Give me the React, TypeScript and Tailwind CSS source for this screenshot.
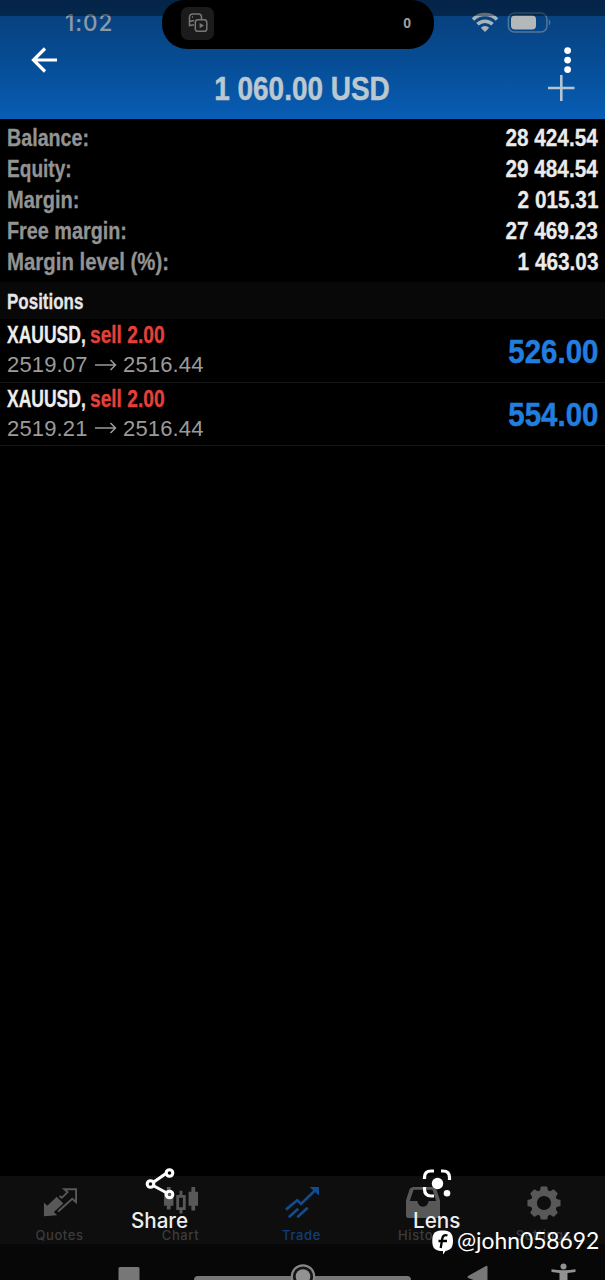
import type { ReactNode } from "react"
import clsx from "clsx"

const summary = [
  { label: "Balance:", value: "28 424.54", fit: "scale-x-[0.82]" },
  { label: "Equity:", value: "29 484.54", fit: "scale-x-[0.795]" },
  { label: "Margin:", value: "2 015.31", fit: "scale-x-[0.835]" },
  { label: "Free margin:", value: "27 469.23", fit: "scale-x-[0.825]" },
  { label: "Margin level (%):", value: "1 463.03", fit: "scale-x-[0.85]" },
]

const positions = [
  { symbol: "XAUUSD,", side: "sell 2.00", open: "2519.07", price: "2516.44", profit: "526.00" },
  { symbol: "XAUUSD,", side: "sell 2.00", open: "2519.21", price: "2516.44", profit: "554.00" },
]

function Tab({ label, active, children }: { label: string; active?: boolean; children: ReactNode }) {
  return (
    <div
      className={clsx(
        "flex-1 flex flex-col items-center pt-[10px] pr-[2px]",
        active ? "text-[#124c8f]" : "text-[#585858]",
      )}
    >
      <svg width="36" height="36" viewBox="0 0 36 36" fill="none">
        {children}
      </svg>
      <span
        className={clsx(
          "mt-[6px] text-[13px] leading-[18px] font-medium tracking-[0.6px]",
          active ? "text-[#103f78]" : "text-[#3c3c3c]",
        )}
      >
        {label}
      </span>
    </div>
  )
}

function Header() {
  return (
    <header className="relative h-[119px] bg-linear-to-b from-[#083e79] via-[#064c93] to-[#085db5]">
      {/* Phone status bar */}
      <div className="flex h-[49px] items-start">
        <span className="ml-[65px] mt-[9px] w-[97px] font-[Inter] text-[22.5px] leading-[28px] font-medium tracking-[0.9px] text-[#8d9aa6]">
          1:02
        </span>
        <div className="relative z-10 flex h-[49px] w-[272px] items-center justify-between rounded-b-[25px] rounded-t-[22px] bg-black pl-[19px] pr-[23px]">
          <div className="-mt-[3px] flex size-[33px] items-center justify-center rounded-[7px] bg-[#1b1b1b]">
            <svg width="20" height="20" viewBox="0 0 20 20" fill="none" stroke="#777" strokeWidth="1.5">
              <path d="M6 12H4.5l-3 .5V4a3 3 0 0 1 3-3h6a3 3 0 0 1 3 3v2M1.5 8.5 6 7.5M4 4h1" />
              <rect x="7.3" y="6.8" width="11.5" height="11.5" rx="2.6" />
              <path d="m11.6 10 4.4 2.6-4.400 2.600z" fill="#777" stroke="none" />
            </svg>
          </div>
          <span className="-mt-[2px] text-[14px] font-bold text-[#a0a0a0]">0</span>
        </div>
        <svg className="ml-[37px] mt-[12px]" width="28" height="21" viewBox="0 0 28 21" fill="none" stroke="#a9b4ba" strokeWidth="3.5">
          <path d="M2 7.5a17 17 0 0 1 24 0M6.5 12.2a10.8 10.8 0 0 1 15 0" />
          <path d="M14 20 9.8 15.8a6 6 0 0 1 8.4 0z" fill="#a9b4ba" stroke="none" />
        </svg>
        <svg className="ml-[8px] mt-[12px]" width="45" height="21" viewBox="0 0 45 21" fill="none">
          <rect x="1.4" y="1" width="38.5" height="19" rx="6" stroke="#547799" strokeWidth="1.5" />
          <rect x="4" y="3.5" width="25" height="14" rx="4" fill="#b3b9ba" />
          <path d="M41.8 7.5c2 1 2 5 0 6z" fill="#547799" />
        </svg>
      </div>
      <h1 className="mt-[20px] -ml-px text-center text-[34px] leading-[39px] font-bold text-[#bcc8d0] scale-x-[0.822] [-webkit-text-stroke:0.5px]">
        1 060.00 USD
      </h1>
      <svg className="absolute left-[548px] top-[75px]" width="27" height="27" viewBox="0 0 27 27" stroke="#b3c4d2" strokeWidth="2.6">
        <path d="M13.3 0v26M0 13h26.5" />
      </svg>
      {/* Viewer controls on top of the app */}
      <div className="absolute inset-x-0 top-0 h-[16px] bg-black/40" />
      <svg className="absolute left-[31px] top-[47px]" width="27" height="26" viewBox="0 0 27 26" fill="none" stroke="white" strokeWidth="3.2">
        <path d="M26 13H3M14 1.5 2.5 13 14 24.5" />
      </svg>
      <svg className="absolute left-[564px] top-[46px]" width="8" height="28" viewBox="0 0 8 28" fill="white">
        <circle cx="3.6" cy="4.6" r="3.4" />
        <circle cx="3.6" cy="14.1" r="3.4" />
        <circle cx="3.6" cy="23.6" r="3.4" />
      </svg>
    </header>
  )
}

export default function App() {
  return (
    <div className="relative flex h-[1280px] w-[605px] flex-col overflow-hidden bg-black font-['Liberation_Sans',sans-serif] whitespace-nowrap">
      <Header />

      <section className="h-[163px] pl-[7px] pr-[7px] pt-[3px]">
        {summary.map((row) => (
          <div
            key={row.label}
            className="flex h-[31px] items-center justify-between text-[24px] leading-[31px] font-bold [-webkit-text-stroke:0.3px]"
          >
            <span className={clsx("origin-left text-[#939393]", row.fit)}>{row.label}</span>
            <span className="origin-right scale-x-[0.865] text-[#ebebeb]">{row.value}</span>
          </div>
        ))}
      </section>

      <h2 className="h-[37px] bg-[#080808] pl-[7px] text-[21.5px] leading-[40px] font-bold text-[#e6e6e6] [-webkit-text-stroke:0.3px]">
        <span className="inline-block origin-left scale-x-[0.79]">Positions</span>
      </h2>

      {positions.map((p) => (
        <div key={p.open} className="flex h-[63.5px] items-center justify-between border-b border-[#171717] pl-[7px] pr-[7px]">
          <div className="h-full pt-px">
            <div className="flex h-[30px] text-[23.5px] leading-[30px] font-bold [-webkit-text-stroke:0.3px]">
              <span className="w-[83px]">
                <span className="inline-block origin-left scale-x-[0.745] text-[#eeeeee]">{p.symbol}</span>
              </span>
              <span className="origin-left scale-x-[0.815] text-[#e5413a]">{p.side}</span>
            </div>
            <div className="flex h-[29px] items-center text-[22px] leading-[29px] tracking-[0.15px] text-[#9b9b9b]">
              <span className="w-[88px]">{p.open}</span>
              <svg width="22" height="12" viewBox="0 0 22 12" fill="none" stroke="currentColor" strokeWidth="1.5">
                <path d="M0 6h20.5M15.5 1l5 5-5 5" />
              </svg>
              <span className="ml-[6px]">{p.price}</span>
            </div>
          </div>
          <span className="mt-[3px] origin-right scale-x-[0.88] text-[33.5px] leading-[40px] font-bold text-[#217edf] [-webkit-text-stroke:0.5px]">
            {p.profit}
          </span>
        </div>
      ))}

      <div className="flex-1" />

      {/* App tabs */}
      <nav className="flex h-[68px] bg-[#0e0e0e] font-[Inter]">
        <Tab label="Quotes">
          <path d="M1 32V17.500l3.500 3.500 10-9.500 7 7-10 9 3.500 3.500z" fill="currentColor" />
          <path d="m17.500 10.500 2.500 2 6-6-3.500-3H35v13.500l-4-3.500L16 27" stroke="currentColor" strokeWidth="2" />
        </Tab>
        <Tab label="Chart">
          <path d="M0 6h3V1h4v5h3v15H7v4H3v-4H0zM26 6h3V1h4v5h3v15h-3v5h-4v-5h-3z" fill="currentColor" />
          <path d="M18 5v6m0 14v4M14.5 11h7v13h-7z" stroke="currentColor" strokeWidth="3" />
        </Tab>
        <Tab label="Trade" active>
          <path d="m1 25 12-10 4 4L32.500 4M4 33l10-9M13 33l11-10" stroke="currentColor" strokeWidth="2.8" />
          <path d="M26 1h10v9z" fill="currentColor" />
        </Tab>
        <Tab label="History">
          <path
            fillRule="evenodd"
            d="M7 1h22l3 2 4 12v16q0 3-3 3H3q-3 0-3-3V15L4 3zM8 4 4 16h8q1 6 6 6t6-6h8L28 4z"
            fill="currentColor"
          />
        </Tab>
        <Tab label="Settings">
          <path
            fillRule="evenodd"
            d="m14.7.5 6.6 0 1 4.2 2.2.9 3.7-2.2 4.5 4.5-2.2 3.7.9 2.2 4.1 1v6.5l-4.1 1-.9 2.2 2.2 3.7-4.5 4.5-3.7-2.2-2.2.9-1 4.1h-6.6l-1-4.1-2.2-.9-3.7 2.2-4.5-4.5 2.2-3.7-.9-2.2-4.1-1v-6.5l4.1-1 .9-2.2-2.2-3.7 4.5-4.5 3.7 2.2 2.2-.9zM18 10.5a7.5 7.5 0 1 0 0 15 7.5 7.5 0 0 0 0-15z"
            fill="currentColor"
          />
        </Tab>
      </nav>
      <div className="h-[36px] bg-[#070707]" />

      {/* System buttons, cut by the bottom edge */}
      <svg className="absolute left-0 top-[1260px]" width="605" height="20" viewBox="0 0 605 20">
        <rect x="118.5" y="7" width="21" height="16" rx="1.5" fill="#777" />
        <rect x="194" y="16" width="217" height="8" rx="4" fill="#777" />
        <circle cx="303" cy="16.5" r="11.2" fill="#171717" stroke="#888" strokeWidth="2.2" />
        <circle cx="303" cy="16.5" r="7.3" fill="#929292" />
        <path d="M468 18q-1-1 0-2l18-10q1.500-1 1.500 1v18z" fill="#777" />
        <circle cx="563.5" cy="6.500" r="3" fill="#929292" />
        <path d="M551.500 9.300q12 2 24 0v2.600l-8 1V20h-8v-7.100l-8-1z" fill="#929292" />
      </svg>

      {/* Share and Lens actions */}
      <svg className="absolute left-[145px] top-[1166px]" width="32" height="34" viewBox="0 0 32 34" fill="none" stroke="white" strokeWidth="3.1">
        <path d="m8 16.5 13-9M8 19.5l13 7" />
        <circle cx="5.5" cy="18" r="3.3" />
        <circle cx="24.5" cy="7" r="3.3" />
        <circle cx="24.5" cy="28.5" r="3.3" />
      </svg>
      <span className="absolute left-[131px] top-[1207px] font-[Inter] text-[21px] leading-[28px] font-medium text-[#ededed]">
        <span className="inline-block origin-left scale-x-[0.98]">Share</span>
      </span>
      <svg className="absolute left-[422px] top-[1168px]" width="32" height="32" viewBox="0 0 32 32" fill="none" stroke="white" strokeWidth="3.2">
        <path d="M2.500 11V9.500Q2.500 3 9 3h3M19 3h2q6.500 0 6.500 6.500V12M2.500 19v2q0 7 6.500 7h3" />
        <circle cx="15.500" cy="15.500" r="5.700" fill="white" stroke="none" />
        <circle cx="25" cy="25.300" r="3.300" fill="white" stroke="none" />
      </svg>
      <span className="absolute left-[413px] top-[1207px] font-[Inter] text-[21px] leading-[28px] font-medium text-[#ededed]">
        <span className="inline-block origin-left scale-x-[0.985]">Lens</span>
      </span>

      {/* Watermark */}
      <div className="absolute left-[432px] top-[1226px] flex h-[30px] items-center">
        <svg width="22" height="28" viewBox="0 0 22 28">
          <path d="M10.500 3.500C18 3.500 21 6 21 14c0 6-2 9-7.500 10L11 27.500V24C3 24 .300 21.500 .300 14 .300 6 3 3.500 10.500 3.500z" fill="white" />
          <path d="M15.500 8.500c-3.500-1-4.800.500-5.300 3.500L8.700 21M6.500 14h8.500" stroke="black" strokeWidth="2.300" fill="none" />
        </svg>
        <span className="-mt-[2px] ml-[3px] origin-left scale-x-[0.95] font-[Lato] text-[24px] leading-[30px] text-white">@john058692</span>
      </div>
    </div>
  )
}
